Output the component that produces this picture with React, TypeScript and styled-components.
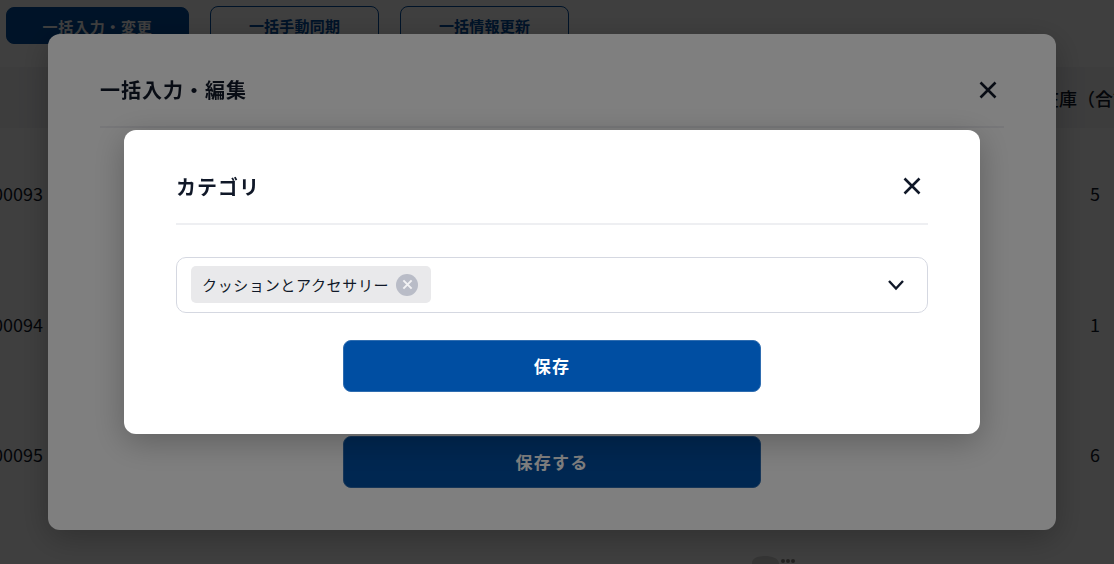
import styled, { createGlobalStyle } from "styled-components";

const GlobalStyle = createGlobalStyle`
  html, body {
    margin: 0;
    height: 100%;
    overflow: hidden;
    background: #fff;
    font-family: "Noto Sans CJK JP", "Noto Sans", sans-serif;
    color: #101828;
  }
`;

const Page = styled.div`
  width: 1160px;
  height: 564px;
  overflow: hidden;
`;

const Toolbar = styled.div`
  height: 67px;
  box-sizing: border-box;
  padding: 6px 0 0 6px;
  display: flex;
  align-items: flex-start;
  gap: 21px;
`;

const ToolButton = styled.button<{ $primary?: boolean; $width: number }>`
  width: ${(p) => p.$width}px;
  height: 37px;
  box-sizing: border-box;
  border-radius: 8px;
  border: 1px solid #004ea2;
  background: ${(p) => (p.$primary ? "#004ea2" : "#fff")};
  color: ${(p) => (p.$primary ? "#fff" : "#004ea2")};
  font-family: inherit;
  font-size: 15px;
  font-weight: 700;
  letter-spacing: ${(p) => (p.$primary ? 0.7 : 0.2)}px;
  padding: 1px 0 0;
  margin-top: ${(p) => (p.$primary ? 1 : 0)}px;
`;

const HeaderRow = styled.div`
  height: 61px;
  display: flex;
  align-items: center;
  justify-content: space-between;
  background: #f5f5f7;
  font-size: 18px;
  font-weight: 500;
`;

const Row = styled.div`
  height: 130.5px;
  display: flex;
  align-items: center;
  justify-content: space-between;
  font-size: 18px;
`;

const CodeCell = styled.div`
  width: 43px;
  display: flex;
  justify-content: flex-end;
  white-space: nowrap;
`;

const StockCell = styled.div`
  width: 110px;
  margin-right: 10px;
  text-align: center;
  white-space: nowrap;
`;

const Thumb = styled.div`
  margin-left: 750px;
  width: 50px;
  height: 60px;
  display: flex;
`;

const Overlay = styled.div`
  position: fixed;
  inset: 0;
  padding: 0 10px 1px 0;
  display: flex;
  align-items: center;
  justify-content: center;
  background: rgba(0, 0, 0, 0.5);
`;

const Modal = styled.div<{ $width: number; $height: number; $pad: number }>`
  width: ${(p) => p.$width}px;
  height: ${(p) => p.$height}px;
  box-sizing: border-box;
  padding: 0 ${(p) => p.$pad}px 42px;
  background: #fff;
  border-radius: 12px;
  box-shadow: 0 8px 32px rgba(0, 0, 0, 0.25);
  display: flex;
  flex-direction: column;
`;

const ModalHead = styled.div<{ $height: number }>`
  height: ${(p) => p.$height}px;
  flex-shrink: 0;
  box-sizing: border-box;
  padding: 20px 6px 0 0;
  display: flex;
  align-items: center;
  justify-content: space-between;
  border-bottom: 2px solid #eeeff2;
`;

const Title = styled.h2`
  margin: 0;
  font-size: 20px;
  font-weight: 700;
  letter-spacing: 1px;
`;

const CloseButton = styled.button`
  width: 20px;
  height: 20px;
  padding: 0;
  border: 0;
  background: none;
  color: #101828;
  display: flex;
`;

const SelectBox = styled.div`
  height: 56px;
  margin-top: 32px;
  box-sizing: border-box;
  padding: 0 22px 0 14px;
  display: flex;
  align-items: center;
  justify-content: space-between;
  border: 1px solid #d5d8e1;
  border-radius: 10px;
`;

const Chip = styled.div`
  height: 37px;
  box-sizing: border-box;
  padding: 0 13px 0 11px;
  display: flex;
  align-items: center;
  gap: 7px;
  background: #e9e9eb;
  border-radius: 5px;
  font-size: 15px;
  letter-spacing: 0.67px;
`;

const ChipRemove = styled.span`
  width: 22px;
  height: 22px;
  display: flex;
  align-items: center;
  justify-content: center;
  border-radius: 50%;
  background: #b9bcc7;
  color: #f2f2f4;
`;

const SaveButton = styled.button<{ $top?: boolean }>`
  width: 418px;
  height: 52px;
  flex-shrink: 0;
  align-self: center;
  margin-top: ${(p) => (p.$top ? "27px" : "auto")};
  border: 1px solid #2f6db0;
  border-radius: 8px;
  background: #004ea2;
  color: #fff;
  font-family: inherit;
  font-size: 17px;
  font-weight: 700;
  letter-spacing: 1.3px;
`;

function CloseIcon({ size, weight = 2.6 }: { size: number; weight?: number }) {
  return (
    <svg width={size} height={size} viewBox="0 0 20 20" fill="none" stroke="currentColor" strokeWidth={weight}>
      <path d="M2.5 2.5 17.5 17.5M17.5 2.5 2.5 17.5" />
    </svg>
  );
}

const rows = [
  { code: "A00093", stock: 5 },
  { code: "A00094", stock: 1 },
  { code: "A00095", stock: 6 },
];

function App() {
  return (
    <>
      <GlobalStyle />
      <Page>
        <Toolbar>
          <ToolButton $primary $width={183}>一括入力・変更</ToolButton>
          <ToolButton $width={169}>一括手動同期</ToolButton>
          <ToolButton $width={169}>一括情報更新</ToolButton>
        </Toolbar>
        <HeaderRow>
          <CodeCell />
          <StockCell>在庫（合計）</StockCell>
        </HeaderRow>
        {rows.map((row) => (
          <Row key={row.code}>
            <CodeCell>{row.code}</CodeCell>
            <StockCell>{row.stock}</StockCell>
          </Row>
        ))}
        <Row>
          <Thumb>
            <svg width="50" height="60" viewBox="0 0 50 60" fill="#8d8a86">
              <path d="M2 8C2 3 8 1 15 1s13 2 14 7v20H2Z" fill="#d8d8d6" />
              <circle cx="33" cy="6" r="2" />
              <circle cx="38" cy="6" r="2" />
              <circle cx="43" cy="6" r="2" />
            </svg>
          </Thumb>
        </Row>
      </Page>

      <Overlay>
        <Modal $width={1008} $height={496} $pad={52}>
          <ModalHead $height={94}>
            <Title>一括入力・編集</Title>
            <CloseButton aria-label="閉じる">
              <CloseIcon size={20} />
            </CloseButton>
          </ModalHead>
          <SaveButton>保存する</SaveButton>
        </Modal>
      </Overlay>

      <Overlay>
        <Modal $width={856} $height={304} $pad={52}>
          <ModalHead $height={95}>
            <Title>カテゴリ</Title>
            <CloseButton aria-label="閉じる">
              <CloseIcon size={20} />
            </CloseButton>
          </ModalHead>
          <SelectBox>
            <Chip>
              クッションとアクセサリー
              <ChipRemove>
                <CloseIcon size={11} weight={3.6} />
              </ChipRemove>
            </Chip>
            <svg width="18" height="12" viewBox="0 0 18 12" fill="none" stroke="#101828" strokeWidth="2.4">
              <path d="M2 2 9 9.5 16 2" />
            </svg>
          </SelectBox>
          <SaveButton $top>保存</SaveButton>
        </Modal>
      </Overlay>
    </>
  );
}

export default App;
